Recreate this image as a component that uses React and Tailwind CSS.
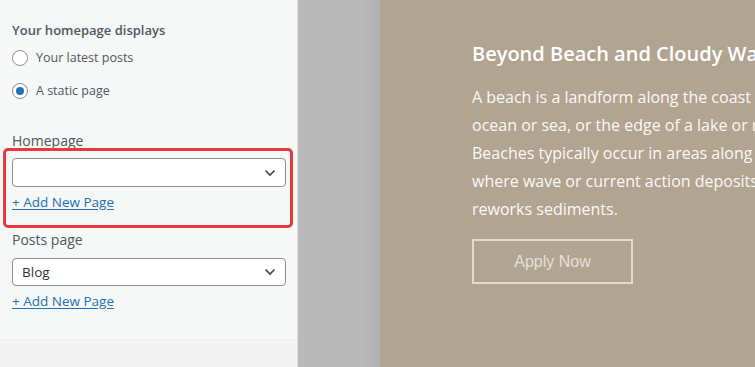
import React from 'react';

const Chevron = () => (
  <svg width="12" height="8" viewBox="0 0 12 8" className="shrink-0">
    <path d="M1.5 1.5 L6 6 L10.5 1.5" fill="none" stroke="#3c434a" strokeWidth="1.6" />
  </svg>
);

const Radio = ({ checked, label, className }) => (
  <label className={`flex items-center h-5 ${className}`}>
    <span className="w-4 h-4 rounded-full border border-[#8c8f94] bg-white flex items-center justify-center">
      {checked && <span className="w-2 h-2 rounded-full bg-[#2271b1]" />}
    </span>
    <span className="ml-[8px] text-[12.5px] text-[#50575e]">{label}</span>
  </label>
);

const Select = ({ value, className }) => (
  <div className={`w-[274px] border border-[#8c8f94] rounded-[4px] bg-white flex items-center justify-between pl-[9px] pr-[9px] ${className}`}>
    <span className="text-[13.5px] text-[#2c3338]">{value}</span>
    <Chevron />
  </div>
);

const AddLink = ({ className }) => (
  <a href="#" className={`block h-5 leading-5 text-[13.5px] text-[#2271b1] underline underline-offset-2 ${className}`}>
    + Add New Page
  </a>
);

export default function App() {
  return (
    <div className="w-[755px] h-[367px] flex overflow-hidden font-['Open_Sans',sans-serif]">
      {/* Customizer sidebar */}
      <div className="w-[298px] shrink-0 h-full bg-[#f6f7f7] border-r border-[#dcdcde] flex flex-col">
        <div className="px-3 flex flex-col">
          <div className="mt-[20px] h-5 leading-5 text-[13px] font-semibold text-[#50575e]">Your homepage displays</div>
          <Radio label="Your latest posts" className="mt-[8px]" />
          <Radio checked label="A static page" className="mt-[13px]" />

          <div className="mt-[30px] h-5 leading-5 text-[14px] text-[#50575e]">Homepage</div>
          <div className="mt-[-3px] -ml-[9px] w-[290px] border-[3px] border-[#e8393b] rounded-[5px] pt-[7px] pb-[13px] pl-[6px]">
            <Select value="" className="h-[29px]" />
            <AddLink className="mt-[5px]" />
          </div>

          <div className="mt-[2px] h-5 leading-5 text-[14px] text-[#50575e]">Posts page</div>
          <Select value="Blog" className="mt-[8px] h-[28px]" />
          <AddLink className="mt-[5px]" />
        </div>
        <div className="mt-[28px] flex-1 border-t border-[#ececec] bg-[#f3f3f3]" />
      </div>

      {/* Preview */}
      <div className="flex-1 flex bg-[#b9b9b9]">
        <div className="w-[82px] shrink-0 bg-gradient-to-r from-[#b9b9b9] from-80% to-[#b0b0b2]" />
        <div className="flex-1 bg-[#b1a491] pl-[92px] pt-[40px] overflow-hidden">
          <h2 className="h-[28px] leading-[28px] text-[20px] font-semibold text-white whitespace-nowrap">
            Beyond Beach and Cloudy Waters
          </h2>
          <p className="mt-[15px] text-[16px] leading-[28px] text-[#fbf9f6] whitespace-nowrap">
            A beach is a landform along the coast of an<br />
            ocean or sea, or the edge of a lake or river.<br />
            Beaches typically occur in areas along the coast<br />
            where wave or current action deposits and<br />
            reworks sediments.
          </p>
          <button className="mt-[16px] w-[161px] h-[45px] border-2 border-[#dedad4] text-[16px] text-[#e4e0da] font-['Liberation_Sans',sans-serif]">
            Apply Now
          </button>
        </div>
      </div>
    </div>
  );
}
